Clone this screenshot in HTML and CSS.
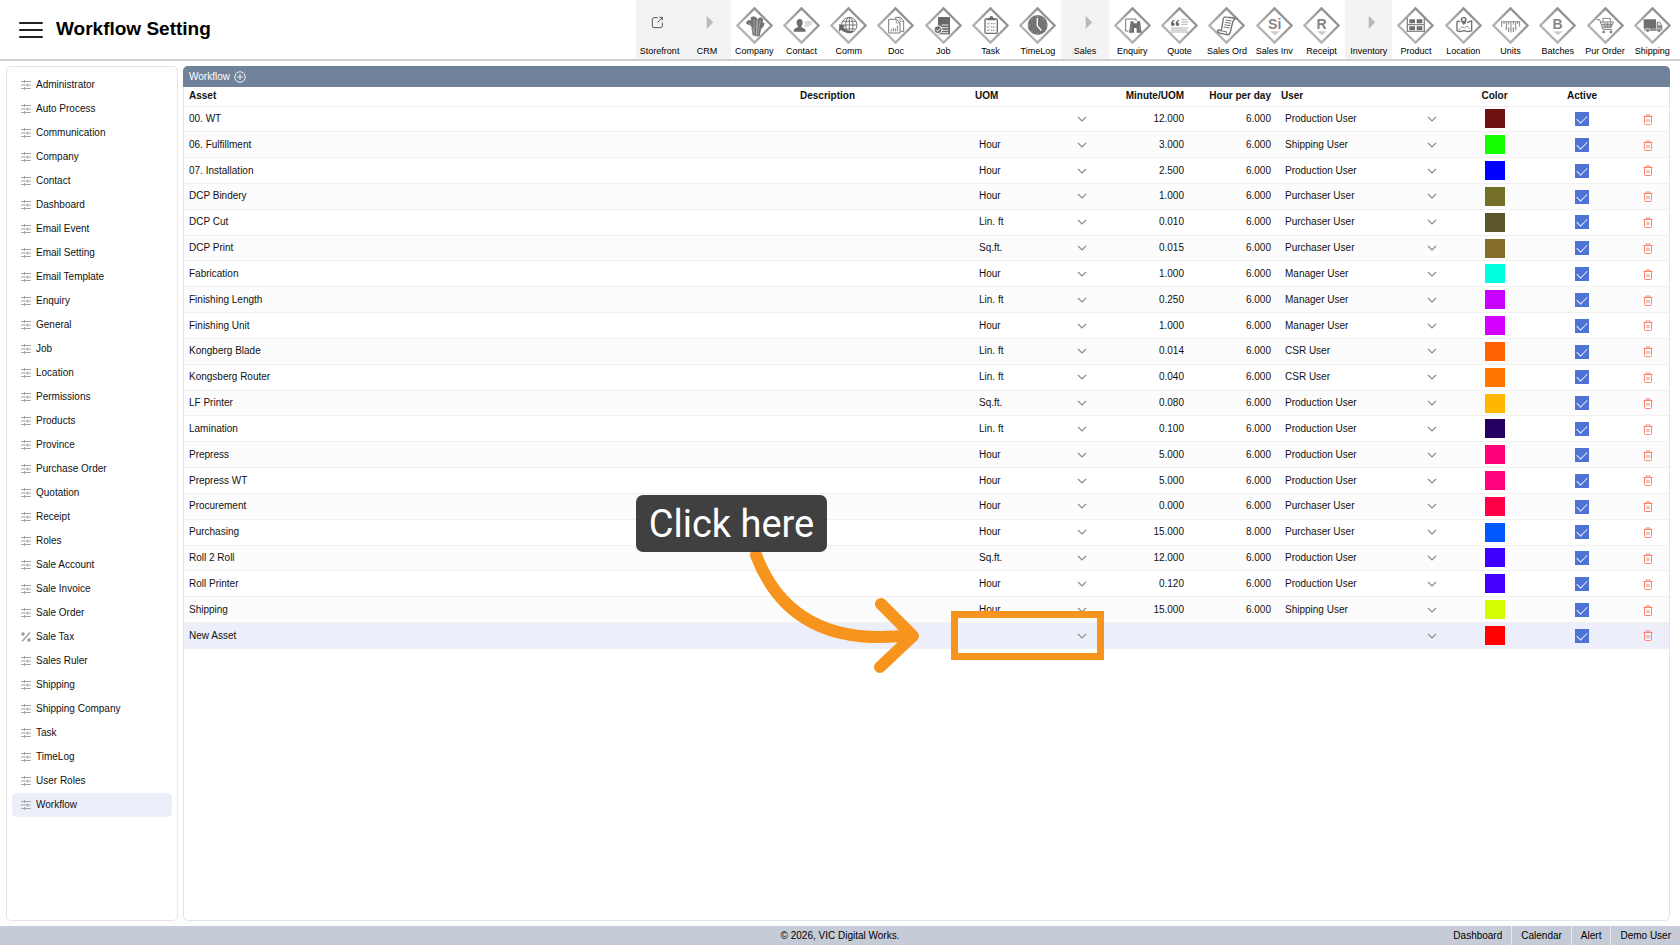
FILE: index.html
```html
<!DOCTYPE html>
<html lang="en">
<head>
  <meta charset="UTF-8">
  <meta name="viewport" content="width=device-width, initial-scale=1.0">
  <title>Workflow Setting</title>
  <link rel="stylesheet" href="styles.css">
</head>
<body>
  <!-- shared icons -->
  <svg class="sprite" aria-hidden="true">
    <defs>
      <linearGradient id="edge" x1="1" y1="0" x2="0" y2="1">
        <stop offset="0" stop-color="#858585"/>
        <stop offset="0.5" stop-color="#a2a2a2"/>
        <stop offset="1" stop-color="#c4c4c4"/>
      </linearGradient>
      <symbol id="diamond" viewBox="0 0 111 111">
        <path d="M55.500 4 L107 55.500 L55.500 107 L4 55.500Z" fill="#fff" stroke="url(#edge)" stroke-width="7"/>
      </symbol>
      <symbol id="sliders" viewBox="0 0 20 20">
        <path d="M0 3h20M0 10h20M0 17h20" stroke="#a6a6a6" stroke-width="2"/>
        <path d="M7 0v6M13 7v6M7 14v6" stroke="#a6a6a6" stroke-width="2"/>
      </symbol>
      <symbol id="percent" viewBox="0 0 20 20">
        <path d="M18 1L2 19" stroke="#999" stroke-width="2.500"/>
        <circle cx="4" cy="4" r="3.500" fill="#999"/>
        <circle cx="16" cy="16" r="3.500" fill="#999"/>
      </symbol>
      <symbol id="chevron" viewBox="0 0 10 10">
        <path d="M1 3l4 4 4-4" fill="none" stroke="#8c8c8c" stroke-width="1.200"/>
      </symbol>
      <symbol id="trash" viewBox="0 0 20 22">
        <path d="M1 5h18M6 5V2h8v3M3 5v14q0 2 2 2h10q2 0 2-2V5M8 10v6M12 10v6" fill="none" stroke="#fa8671" stroke-width="2"/>
      </symbol>
    </defs>
  </svg>

  <header class="topbar">
    <button class="menu-btn" type="button" aria-label="Menu"><span></span><span></span><span></span></button>
    <h1>Workflow Setting</h1>
    <nav class="modules">
      <a class="module group" href="#">
        <svg viewBox="0 0 111 111"><path d="M50 32h-11q-5 0-5 5v20q0 5 5 5h20q5 0 5-5V47M55 31h9v9M64 31L50 46" fill="none" stroke="#555" stroke-width="3"/></svg>
        <span>Storefront</span>
      </a>
      <a class="module group" href="#">
        <svg viewBox="0 0 111 111"><path d="M56 27L76 46L56 66Z" fill="#b9b9b9"/></svg>
        <span>CRM</span>
      </a>
      <a class="module" href="#">
        <svg viewBox="0 0 111 111"><use href="#diamond"/><path d="M30 45l9-7 9 5v15l-4-2-12-5zM44 31l10-3 9 5-2 55-11-3-4-24zM64 36l9-5 9 5-11 50-9 3zM76 46l10 1-3 11-11 12z" fill="#727272"/><path d="M54 38l1 46M64 40l-2 44M73 40L65 84M40 47l13 28" stroke="#bbb" stroke-width="2"/></svg>
        <span>Company</span>
      </a>
      <a class="module" href="#">
        <svg viewBox="0 0 111 111"><use href="#diamond"/><ellipse cx="50" cy="47" rx="9" ry="11" fill="#6c6c6c"/><path d="M45 54h10v6l10 5q3 2 3 9H32q0-7 3-9l10-5z" fill="#6c6c6c"/><path d="M65 45h22M65 51h22M65 57h14" stroke="#b5b5b5" stroke-width="3"/></svg>
        <span>Contact</span>
      </a>
      <a class="module" href="#">
        <svg viewBox="0 0 111 111"><use href="#diamond"/><g fill="none" stroke="#777" stroke-width="3"><circle cx="58" cy="54" r="23"/><ellipse cx="58" cy="54" rx="11" ry="23"/><path d="M35 54h46M38 43h40M40 66h37M58 31v46"/></g><path d="M28 51l17 6-5 5q12 12 34 10-19 15-41-3l-6 5z" fill="#666"/></svg>
        <span>Comm</span>
      </a>
      <a class="module" href="#">
        <svg viewBox="0 0 111 111"><use href="#diamond"/><path d="M55 35V31h15l10 10v32H70" fill="none" stroke="#777" stroke-width="3"/><path d="M35 37h24l10 10v31H35z" fill="#fff" stroke="#777" stroke-width="3"/><path d="M58 38v10h10M69 32v11h10" fill="none" stroke="#777" stroke-width="2"/><path d="M43 73v-7M49 73V62M55 73v-9M61 73V56" stroke="#888" stroke-width="3"/></svg>
        <span>Doc</span>
      </a>
      <a class="module" href="#">
        <svg viewBox="0 0 111 111"><use href="#diamond"/><path d="M39 30h36v52H39z" fill="#686868"/><path d="M50 54h20M50 62h20M50 70h20M50 77h20" stroke="#eee" stroke-width="3"/><circle cx="39" cy="68" r="12" fill="#6d6d6d" stroke="#fff" stroke-width="3"/><path d="M33 68l5 5 8-9" fill="none" stroke="#fff" stroke-width="3"/></svg>
        <span>Job</span>
      </a>
      <a class="module" href="#">
        <svg viewBox="0 0 111 111"><use href="#diamond"/><rect x="39" y="36" width="37" height="43" rx="3" fill="#fff" stroke="#6e6e6e" stroke-width="4"/><path d="M47 33h5q0-6 6-6t6 6h5v7H47z" fill="#6e6e6e"/><path d="M45 49l3 3 5-6M45 59l3 3 5-6M45 69l3 3 5-6" fill="none" stroke="#666" stroke-width="2"/><path d="M57 50h13M57 60h13M57 70h13" stroke="#777" stroke-width="3" stroke-dasharray="4 2"/></svg>
        <span>Task</span>
      </a>
      <a class="module" href="#">
        <svg viewBox="0 0 111 111"><use href="#diamond"/><circle cx="56" cy="54" r="30" fill="#747474"/><path d="M55 33v23l12 15" fill="none" stroke="#fff" stroke-width="4"/><path d="M55 25v5M55 78v5M27 54h5M80 54h5M36 34l3 3M75 34l-3 3M36 74l3-3" stroke="#ccc" stroke-width="2"/></svg>
        <span>TimeLog</span>
      </a>
      <a class="module group" href="#">
        <svg viewBox="0 0 111 111"><path d="M56 27L76 46L56 66Z" fill="#b9b9b9"/></svg>
        <span>Sales</span>
      </a>
      <a class="module" href="#">
        <svg viewBox="0 0 111 111"><use href="#diamond"/><path d="M43 72h-8V36h31v6" fill="none" stroke="#777" stroke-width="3"/><path d="M50 43h9v6h10v-6h9l5 34H68V63h-8v14H45z" fill="#6c6c6c"/><path d="M51 56v16M77 56v16" stroke="#aaa" stroke-width="2"/></svg>
        <span>Enquiry</span>
      </a>
      <a class="module" href="#">
        <svg viewBox="0 0 111 111"><use href="#diamond"/><path d="M40 38q-10 3-10 13 0 6 6 6 5 0 5-5t-5-5q0-4 5-6zM54 38q-10 3-10 13 0 6 6 6 5 0 5-5t-5-5q0-4 5-6z" fill="#666"/><path d="M61 38h17M61 45h21M61 52h17M30 63h52M30 69h48M30 75h52" stroke="#b0b0b0" stroke-width="3"/></svg>
        <span>Quote</span>
      </a>
      <a class="module" href="#">
        <svg viewBox="0 0 111 111"><use href="#diamond"/><path d="M46 35q3-6 9-5l28 4q-8 4-10 16l-6 25q-3 10-11 8l-24-5q-5-4-2-9l10 1z" fill="#fff" stroke="#6f6f6f" stroke-width="4"/><path d="M30 70l25 4q-1 7 4 9M53 39l18 3M51 46l18 3M49 53l18 3M47 60l18 3" fill="none" stroke="#777" stroke-width="3"/></svg>
        <span>Sales Ord</span>
      </a>
      <a class="module" href="#">
        <svg viewBox="0 0 111 111"><use href="#diamond"/><text class="mark" x="56" y="65">Si</text><path d="M42 73h30L57 85z" fill="#ccc"/></svg>
        <span>Sales Inv</span>
      </a>
      <a class="module" href="#">
        <svg viewBox="0 0 111 111"><use href="#diamond"/><text class="mark" x="56" y="65">R</text><path d="M42 73h30L57 85z" fill="#ccc"/></svg>
        <span>Receipt</span>
      </a>
      <a class="module group" href="#">
        <svg viewBox="0 0 111 111"><path d="M56 27L76 46L56 66Z" fill="#b9b9b9"/></svg>
        <span>Inventory</span>
      </a>
      <a class="module" href="#">
        <svg viewBox="0 0 111 111"><use href="#diamond"/><path d="M31 33v42M82 33v42M31 53h51M31 73h51" stroke="#888" stroke-width="4"/><path d="M37 37h17v12H37zM59 37h17v12H59zM37 58h17v12H37zM59 58h17v12H59z" fill="#6e6e6e"/></svg>
        <span>Product</span>
      </a>
      <a class="module" href="#">
        <svg viewBox="0 0 111 111"><use href="#diamond"/><path d="M46 45l-7-3-3 3v26l9 3 12-3 13 3 10-3V42l-7 2-6 3" fill="none" stroke="#6f6f6f" stroke-width="4"/><path d="M42 69l9-10 7 4 8-6 8 9" fill="none" stroke="#999" stroke-width="3"/><path d="M56 54q-9-9-9-16t9-8 9 8-9 16z" fill="#6f6f6f"/><circle cx="56" cy="38" r="4" fill="#fff"/></svg>
        <span>Location</span>
      </a>
      <a class="module" href="#">
        <svg viewBox="0 0 111 111"><use href="#diamond"/><path d="M28 44h56" stroke="#999" stroke-width="3"/><path d="M29 43v16M36 43v8M43 43v25M50 43v10M57 43v34M64 43v10M71 43v25M77 43v8M83 43v16" stroke="#858585" stroke-width="3"/><path d="M43 61v8M50 61v14M64 61v14M71 61v8" stroke="#999" stroke-width="4"/></svg>
        <span>Units</span>
      </a>
      <a class="module" href="#">
        <svg viewBox="0 0 111 111"><use href="#diamond"/><text class="mark" x="56" y="65">B</text><path d="M42 73h30L57 85z" fill="#ccc"/></svg>
        <span>Batches</span>
      </a>
      <a class="module" href="#">
        <svg viewBox="0 0 111 111"><use href="#diamond"/><path d="M29 38h9l10 30h28M41 45h38l-7 17H47M48 45V34h22v10M44 52h32M46 57h29M54 46v15M62 46v15M70 46v15" fill="none" stroke="#808080" stroke-width="3"/><circle cx="50" cy="75" r="4" fill="#777"/><circle cx="72" cy="75" r="4" fill="#777"/></svg>
        <span>Pur Order</span>
      </a>
      <a class="module" href="#">
        <svg viewBox="0 0 111 111"><use href="#diamond"/><path d="M29 37h37v28H29zM31 67h52v4H31z" fill="#6f6f6f"/><path d="M68 44h10l7 12v13H68z" fill="#8a8a8a"/><path d="M72 47h5l4 8h-9z" fill="#eee"/><circle cx="41" cy="70" r="6" fill="#777" stroke="#fff" stroke-width="2"/><circle cx="75" cy="70" r="6" fill="#777" stroke="#fff" stroke-width="2"/></svg>
        <span>Shipping</span>
      </a>
    </nav>
  </header>

  <main class="content">
    <aside class="sidebar">
      <ul id="settings"></ul>
    </aside>

    <section class="panel">
      <div class="panel-head">
        <span>Workflow</span>
        <button type="button" aria-label="Add workflow">
          <svg viewBox="0 0 24 24"><circle cx="12" cy="12" r="10.500"/><path d="M12 6v12M6 12h12"/></svg>
        </button>
      </div>
      <table class="grid">
        <thead>
          <tr>
            <th class="asset">Asset</th>
            <th class="desc">Description</th>
            <th class="uom">UOM</th>
            <th class="minute">Minute/UOM</th>
            <th class="hour">Hour per day</th>
            <th class="user">User</th>
            <th class="color">Color</th>
            <th class="active">Active</th>
            <th class="remove"></th>
          </tr>
        </thead>
        <tbody id="rows"></tbody>
      </table>

      <!-- guide shown on top of the table -->
      <div class="target"></div>
      <svg class="arrow" viewBox="0 0 180 130" aria-hidden="true">
        <path d="M14 16Q50 111 169 96M139 65L171 97L138 128"/>
      </svg>
      <div class="tip">Click here</div>
    </section>
  </main>

  <footer class="footer">
    <span class="copy">© 2026, VIC Digital Works.</span>
    <nav>
      <a href="#">Dashboard</a>
      <a href="#">Calendar</a>
      <a href="#">Alert</a>
      <a href="#">Demo User</a>
    </nav>
  </footer>

  <script src="script.js"></script>
</body>
</html>
```

FILE: styles.css
```css
* {
  box-sizing: border-box;
}
body {
  margin: 0;
  min-height: 100vh;
  display: flex;
  flex-direction: column;
  font-family: "Liberation Sans", Arial, sans-serif;
  font-size: 10px;
  line-height: 14px;
  color: #111;
  background: #fff;
}
a {
  color: inherit;
  text-decoration: none;
}
button {
  padding: 0;
  border: none;
  background: none;
  cursor: pointer;
}
.sprite {
  position: absolute;
  width: 0;
  height: 0;
}

/* top bar */
.topbar {
  display: flex;
  align-items: stretch;
  height: 61px;
  padding: 0 4px 0 19px;
  border-bottom: 2px solid #cfcfcf;
}
.menu-btn {
  display: flex;
  flex-direction: column;
  justify-content: center;
  gap: 5px;
  width: 24px;
  margin-right: 13px;
}
.menu-btn span {
  height: 2px;
  border-radius: 1px;
  background: #222;
}
h1 {
  margin: 0;
  font-size: 19px;
  line-height: 58px;
  color: #000;
  white-space: nowrap;
}
.modules {
  flex: 0 1 1040px;
  display: grid;
  grid-template-columns: repeat(22, minmax(0, 1fr));
  margin-left: auto;
}
.module {
  display: flex;
  flex-direction: column;
  align-items: center;
  padding-top: 7px;
  font-size: 9px;
  line-height: 14px;
  white-space: nowrap;
  color: #000;
}
.module svg {
  flex: none;
  width: 37px;
  height: 37px;
}
.module.group {
  background: #f3f3f3;
}
.mark {
  font: bold 42px "Liberation Sans", Arial, sans-serif;
  text-anchor: middle;
  fill: #858585;
}

/* page */
.content {
  flex: 1;
  display: flex;
  gap: 5px;
  padding: 5px 10px 5px 6px;
}
.sidebar {
  flex: none;
  width: 172px;
  padding: 6px 5px;
  border: 1px solid #e4e4e6;
  border-radius: 5px;
}
.sidebar ul {
  margin: 0;
  padding: 0;
  list-style: none;
}
.sidebar a {
  display: flex;
  align-items: center;
  gap: 5px;
  height: 24px;
  padding: 0 9px;
  border-radius: 5px;
}
.sidebar a.current {
  background: #eceefa;
}
.sidebar svg {
  width: 10px;
  height: 10px;
}
.panel {
  position: relative;
  flex: 1;
  min-width: 0;
  border: 1px solid #dfe3ea;
  border-radius: 5px;
}
.panel-head {
  display: flex;
  align-items: center;
  gap: 4px;
  height: 21px;
  margin: -1px -1px 0;
  padding: 0 6px;
  border-radius: 5px 5px 0 0;
  color: #fff;
  background: #70819a;
}
.panel-head button {
  display: flex;
}
.panel-head svg {
  width: 12px;
  height: 12px;
  fill: none;
  stroke: #f2f4f7;
  stroke-width: 2;
}

/* workflow table */
.grid {
  width: 100%;
  height: 562px;
  table-layout: fixed;
  border-collapse: collapse;
}
.grid th,
.grid td {
  padding: 0 5px;
  border-bottom: 1px solid #f0f0f0;
  text-align: left;
  white-space: nowrap;
}
.grid thead tr {
  height: 19px;
}
.grid tbody tr {
  height: 25px;
}
.grid tbody tr:nth-child(even) {
  background: #fcfcfc;
}
.grid tbody tr.selected {
  background: #eceefa;
}
.grid .desc { width: 175px; }
.grid .uom { width: 123px; }
.grid .minute { width: 96px; text-align: right; }
.grid .hour { width: 87px; text-align: right; }
.grid .user { width: 167px; }
.grid .color { width: 103px; text-align: center; }
.grid .active { width: 72px; text-align: center; }
.grid .remove { width: 51px; padding-right: 16px; text-align: right; }

.pick {
  display: grid;
  align-items: center;
}
.pick select,
.pick svg {
  grid-area: 1 / 1;
}
.pick select {
  width: 100%;
  height: 18px;
  padding: 0 4px;
  border: none;
  appearance: none;
  font: inherit;
  color: inherit;
  background: none;
}
.pick svg {
  justify-self: end;
  width: 10px;
  height: 10px;
  margin-right: 1px;
  pointer-events: none;
}
.grid input,
.grid button {
  vertical-align: middle;
}
.grid input[type="color"] {
  width: 20px;
  height: 19px;
  padding: 0;
  border: none;
  appearance: none;
  background: none;
}
.grid input[type="color"]::-webkit-color-swatch-wrapper {
  padding: 0;
}
.grid input[type="color"]::-webkit-color-swatch {
  border: none;
}
.grid input[type="checkbox"] {
  display: inline-grid;
  place-content: center;
  width: 14px;
  height: 14px;
  margin: 0;
  appearance: none;
  background: #4f73d4;
}
.grid input[type="checkbox"]:checked::before {
  content: "";
  width: 9px;
  height: 5px;
  margin-bottom: 2px;
  border: solid #e3e9fa;
  border-width: 0 0 1px 1px;
  transform: rotate(-45deg);
}
.grid button svg {
  display: block;
  width: 10px;
  height: 11px;
}

/* guide */
.target {
  position: absolute;
  top: 544px;
  right: 565px;
  width: 153px;
  height: 49px;
  border: 7px solid #f7941d;
}
.arrow {
  position: absolute;
  top: 472px;
  right: 747px;
  width: 180px;
  height: 130px;
  overflow: visible;
  fill: none;
  stroke: #f7941d;
  stroke-width: 12;
  stroke-linecap: round;
  stroke-linejoin: round;
}
.tip {
  position: absolute;
  top: 428px;
  right: 842px;
  width: 191px;
  height: 57px;
  border-radius: 7px;
  font-family: Roboto, "Liberation Sans", sans-serif;
  font-size: 38px;
  line-height: 58px;
  text-align: center;
  white-space: nowrap;
  color: #fff;
  background: rgba(50, 50, 50, 0.93);
}

/* footer */
.footer {
  display: grid;
  grid-template-columns: 1fr auto 1fr;
  height: 19px;
  line-height: 20px;
  color: #000;
  background: #c6ccd7;
}
.copy {
  grid-column: 2;
}
.footer nav {
  display: flex;
  justify-content: flex-end;
}
.footer nav a {
  padding: 0 9px;
}
.footer nav a + a {
  border-left: 1px solid #e6e9ee;
}
```

FILE: script.js
```js
const settings = [
  "Administrator", "Auto Process", "Communication", "Company", "Contact", "Dashboard",
  "Email Event", "Email Setting", "Email Template", "Enquiry", "General", "Job",
  "Location", "Permissions", "Products", "Province", "Purchase Order", "Quotation",
  "Receipt", "Roles", "Sale Account", "Sale Invoice", "Sale Order", "Sale Tax",
  "Sales Ruler", "Shipping", "Shipping Company", "Task", "TimeLog", "User Roles", "Workflow"
];

// asset, uom, minute/uom, hour per day, user, color
const workflows = [
  ["00. WT", "", "12.000", "6.000", "Production User", "#701010"],
  ["06. Fulfillment", "Hour", "3.000", "6.000", "Shipping User", "#15ff00"],
  ["07. Installation", "Hour", "2.500", "6.000", "Production User", "#0000ff"],
  ["DCP Bindery", "Hour", "1.000", "6.000", "Purchaser User", "#747028"],
  ["DCP Cut", "Lin. ft", "0.010", "6.000", "Purchaser User", "#5b562b"],
  ["DCP Print", "Sq.ft.", "0.015", "6.000", "Purchaser User", "#876c28"],
  ["Fabrication", "Hour", "1.000", "6.000", "Manager User", "#00ffe1"],
  ["Finishing Length", "Lin. ft", "0.250", "6.000", "Manager User", "#c800ff"],
  ["Finishing Unit", "Hour", "1.000", "6.000", "Manager User", "#d400ff"],
  ["Kongberg Blade", "Lin. ft", "0.014", "6.000", "CSR User", "#ff6200"],
  ["Kongsberg Router", "Lin. ft", "0.040", "6.000", "CSR User", "#ff7700"],
  ["LF Printer", "Sq.ft.", "0.080", "6.000", "Production User", "#ffb700"],
  ["Lamination", "Lin. ft", "0.100", "6.000", "Production User", "#260061"],
  ["Prepress", "Hour", "5.000", "6.000", "Production User", "#ff007b"],
  ["Prepress WT", "Hour", "5.000", "6.000", "Production User", "#ff0080"],
  ["Procurement", "Hour", "0.000", "6.000", "Purchaser User", "#ff0048"],
  ["Purchasing", "Hour", "15.000", "8.000", "Purchaser User", "#0059ff"],
  ["Roll 2 Roll", "Sq.ft.", "12.000", "6.000", "Production User", "#4000ff"],
  ["Roll Printer", "Hour", "0.120", "6.000", "Production User", "#4400ff"],
  ["Shipping", "Hour", "15.000", "6.000", "Shipping User", "#d4ff00"],
  ["New Asset", "", "", "", "", "#ff0000"]
];

const select = (label, value) => `
  <span class="pick">
    <select aria-label="${label}"><option>${value}</option></select>
    <svg><use href="#chevron"/></svg>
  </span>`;

document.getElementById("settings").innerHTML = settings.map(name => `
  <li><a href="#"${name === "Workflow" ? ' class="current"' : ""}>
    <svg><use href="#${name === "Sale Tax" ? "percent" : "sliders"}"/></svg>${name}
  </a></li>`).join("");

document.getElementById("rows").innerHTML = workflows.map(([asset, uom, minute, hour, user, color]) => `
  <tr${asset === "New Asset" ? ' class="selected"' : ""}>
    <td>${asset}</td>
    <td></td>
    <td>${select("UOM", uom)}</td>
    <td class="minute">${minute}</td>
    <td class="hour">${hour}</td>
    <td>${select("User", user)}</td>
    <td class="color"><input type="color" aria-label="Color" value="${color}"></td>
    <td class="active"><input type="checkbox" aria-label="Active" checked></td>
    <td class="remove"><button type="button" aria-label="Delete"><svg><use href="#trash"/></svg></button></td>
  </tr>`).join("");
```
